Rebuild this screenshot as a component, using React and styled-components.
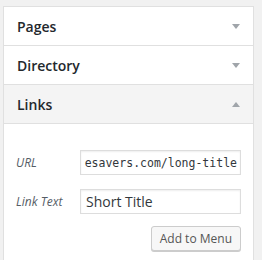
import React from "react";
import styled, { createGlobalStyle } from "styled-components";

const GlobalStyle = createGlobalStyle`
	body {
		margin: 0;
		background: #f1f1f1;
		font-family: "Open Sans", "Liberation Sans", sans-serif;
	}
`;

const Page = styled.div`
	padding: 6px 0 0 3px;
`;

const Panel = styled.div`
	width: 251px;
	box-sizing: border-box;
	border: 1px solid #e0e0e0;
	background: #ffffff;
`;

const Section = styled.div`
	border-bottom: 1px solid #e0e0e0;
	&:last-child {
		border-bottom: none;
	}
`;

const SectionHeader = styled.div`
	display: flex;
	align-items: center;
	justify-content: space-between;
	height: 38px;
	padding: 0 13px 0 13px;
	background: ${(p) => (p.open ? "#f4f4f4" : "#ffffff")};
	border-bottom: ${(p) => (p.open ? "1px solid #e0e0e0" : "none")};
`;

const SectionTitle = styled.h3`
	margin: 0;
	font-size: 14px;
	font-weight: 600;
	color: #23282d;
`;

const Arrow = styled.span`
	width: 0;
	height: 0;
	border-left: 4px solid transparent;
	border-right: 4px solid transparent;
	${(p) =>
		p.up
			? "border-bottom: 5px solid #a0a5aa;"
			: "border-top: 5px solid #a0a5aa;"}
`;

const SectionBody = styled.div`
	padding: 26px 12px 10px 12px;
	display: flex;
	flex-direction: column;
	gap: 14px;
`;

const FieldRow = styled.div`
	display: flex;
	align-items: center;
	height: 25px;
`;

const Label = styled.label`
	width: 64px;
	font-size: 12px;
	font-style: italic;
	color: #555d66;
`;

const Input = styled.input`
	width: 161px;
	height: 25px;
	box-sizing: border-box;
	border: 1px solid #dddddd;
	box-shadow: inset 0 1px 2px rgba(0, 0, 0, 0.07);
	padding: 0 5px;
	font-size: 14px;
	color: #32373c;
	font-family: "Open Sans", "Liberation Sans", sans-serif;
	outline: none;
`;

const UrlInput = styled(Input)`
	padding: 0 3px;
	font-family: "DejaVu Sans Mono", "Liberation Mono", monospace;
	font-size: 11.5px;
	text-align: right;
`;

const Actions = styled.div`
	display: flex;
	justify-content: flex-end;
	margin-top: -2px;
`;

const Button = styled.button`
	height: 25px;
	padding: 0 8px;
	font-family: "Open Sans", "Liberation Sans", sans-serif;
	font-size: 12px;
	color: #555555;
	background: #f7f7f7;
	border: 1px solid #cccccc;
	border-radius: 3px;
	box-shadow: 0 1px 0 #cccccc;
`;

export default function App() {
	return (
		<>
			<GlobalStyle />
			<Page>
				<Panel>
					<Section>
						<SectionHeader>
							<SectionTitle>Pages</SectionTitle>
							<Arrow />
						</SectionHeader>
					</Section>
					<Section>
						<SectionHeader>
							<SectionTitle>Directory</SectionTitle>
							<Arrow />
						</SectionHeader>
					</Section>
					<Section>
						<SectionHeader open>
							<SectionTitle>Links</SectionTitle>
							<Arrow up />
						</SectionHeader>
						<SectionBody>
							<FieldRow>
								<Label>URL</Label>
								<UrlInput defaultValue="esavers.com/long-title" />
							</FieldRow>
							<FieldRow>
								<Label>Link Text</Label>
								<Input defaultValue="Short Title" />
							</FieldRow>
							<Actions>
								<Button>Add to Menu</Button>
							</Actions>
						</SectionBody>
					</Section>
				</Panel>
			</Page>
		</>
	);
}
